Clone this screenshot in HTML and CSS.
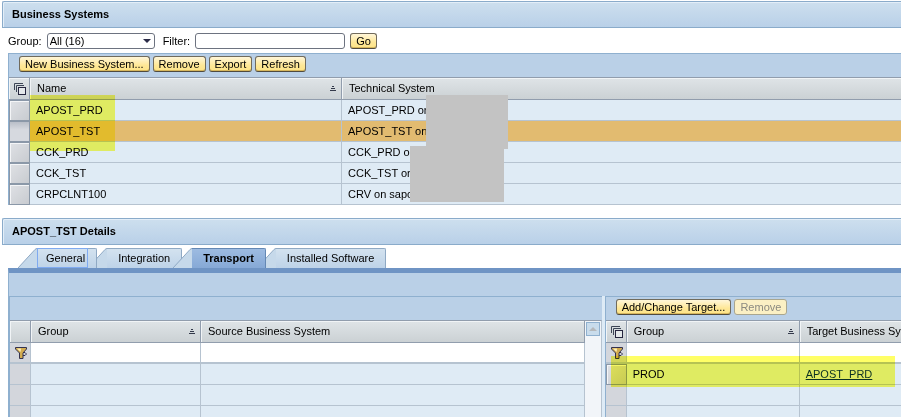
FILE: index.html
```html
<!DOCTYPE html>
<html lang="en">
    <head>
        <meta charset="utf-8">
        <title>Business Systems</title>
        <link rel="stylesheet" href="styles.css">
    </head>
    <body>
        <!-- shared icons -->
        <svg class="sprite" width="0" height="0" aria-hidden="true">
            <symbol id="icon-select" viewBox="0 0 12 12">
                <path d="M0.5 7V0.5H9M2.5 9V2.5H10" fill="none" stroke="#3d4656"/>
                <rect x="4.5" y="4.5" width="7" height="7" fill="#e4e8ea" stroke="#26263f"/>
            </symbol>
            <symbol id="icon-sort" viewBox="0 0 6 5">
                <path d="M2 0.5H4M1 2.5H5M0 4.5H6" fill="none" stroke="#33394a"/>
            </symbol>
            <symbol id="icon-filter" viewBox="0 0 13 12">
                <path d="M0.5 0.5H11.5V2L8 6V11.5H4.5V6L0.5 2Z" fill="#d3ac4e" stroke="#34324e"/>
                <path d="M2 1.5H6L5.5 5Z" fill="#fff1bd"/>
                <path d="M8 5.5H10L11.5 7L10 8.5H8" fill="none" stroke="#34324e"/>
            </symbol>
            <symbol id="slope" viewBox="0 0 19 20">
                <path d="M0 20L17 1.5Q18 0.5 19 0.5V20Z" class="slope-fill"/>
                <path d="M0 20L17 1.5Q18 0.5 19 0.5" class="slope-line"/>
            </symbol>
        </svg>

        <h1 class="panel-header">Business Systems</h1>
        <form class="filter-bar">
            <label for="group">Group:</label>
            <span class="dropdown">
                <select id="group"><option>All (16)</option></select>
            </span>
            <label class="filter-label" for="filter">Filter:</label>
            <input class="text-field" id="filter" type="text">
            <button class="btn" type="button">Go</button>
        </form>

        <div class="systems">
            <div class="toolbar">
                <button class="btn" type="button">New Business System...</button>
                <button class="btn" type="button">Remove</button>
                <button class="btn" type="button">Export</button>
                <button class="btn" type="button">Refresh</button>
            </div>
            <table class="grid">
                <colgroup><col class="col-select"><col class="col-name"><col></colgroup>
                <thead>
                    <tr>
                        <th class="select-head"><svg class="icon" width="12" height="12"><use href="#icon-select"/></svg></th>
                        <th><div class="head">Name <svg width="6" height="5"><use href="#icon-sort"/></svg></div></th>
                        <th><div class="head">Technical System</div></th>
                    </tr>
                </thead>
                <tbody>
                    <tr>
                        <td class="row-head"><button class="row-btn" type="button" aria-label="Select row"></button></td>
                        <td>APOST_PRD</td>
                        <td>APOST_PRD on</td>
                    </tr>
                    <tr class="selected">
                        <td class="row-head"><button class="row-btn" type="button" aria-label="Select row"></button></td>
                        <td>APOST_TST</td>
                        <td>APOST_TST on</td>
                    </tr>
                    <tr>
                        <td class="row-head"><button class="row-btn" type="button" aria-label="Select row"></button></td>
                        <td>CCK_PRD</td>
                        <td>CCK_PRD on</td>
                    </tr>
                    <tr>
                        <td class="row-head"><button class="row-btn" type="button" aria-label="Select row"></button></td>
                        <td>CCK_TST</td>
                        <td>CCK_TST on</td>
                    </tr>
                    <tr>
                        <td class="row-head"><button class="row-btn" type="button" aria-label="Select row"></button></td>
                        <td>CRPCLNT100</td>
                        <td>CRV on sapc</td>
                    </tr>
                </tbody>
            </table>
            <div class="marker marker-names"></div>
            <div class="redacted redacted-top"></div>
            <div class="redacted redacted-bottom"></div>
        </div>

        <h2 class="panel-header details-header">APOST_TST Details</h2>
        <div class="tabs" role="tablist">
            <button class="tab tab-1" role="tab" type="button"><svg width="19" height="20"><use href="#slope"/></svg><span class="tab-label focused">General</span></button>
            <button class="tab tab-2" role="tab" type="button"><svg width="19" height="20"><use href="#slope"/></svg><span class="tab-label">Integration</span></button>
            <button class="tab active" role="tab" type="button" aria-selected="true"><svg width="19" height="20"><use href="#slope"/></svg><span class="tab-label">Transport</span></button>
            <button class="tab" role="tab" type="button"><svg width="19" height="20"><use href="#slope"/></svg><span class="tab-label">Installed Software</span></button>
        </div>

        <div class="tab-panel">
            <div class="transport">
                <div class="source">
                    <div class="toolbar"></div>
                    <div class="scroll-area">
                        <table class="grid">
                            <colgroup><col class="col-select"><col class="col-group-source"><col></colgroup>
                            <thead>
                                <tr>
                                    <th></th>
                                    <th><div class="head">Group <svg width="6" height="5"><use href="#icon-sort"/></svg></div></th>
                                    <th><div class="head">Source Business System</div></th>
                                </tr>
                            </thead>
                            <tbody>
                                <tr class="filter-row">
                                    <td class="row-head"><svg class="icon" width="13" height="12"><use href="#icon-filter"/></svg></td>
                                    <td><input type="text" aria-label="Filter group"></td>
                                    <td><input type="text" aria-label="Filter source business system"></td>
                                </tr>
                                <tr><td class="row-head"></td><td></td><td></td></tr>
                                <tr><td class="row-head"></td><td></td><td></td></tr>
                                <tr><td class="row-head"></td><td></td><td></td></tr>
                            </tbody>
                        </table>
                        <div class="scrollbar">
                            <button class="scroll-up" type="button" aria-label="Scroll up"><svg width="8" height="4" viewBox="0 0 8 4"><path d="M4 0L8 4H0Z" fill="#b5b8bb"/></svg></button>
                        </div>
                    </div>
                </div>
                <div class="target">
                    <div class="toolbar">
                        <button class="btn" type="button">Add/Change Target...</button>
                        <button class="btn" type="button" disabled>Remove</button>
                    </div>
                    <table class="grid">
                        <colgroup><col class="col-select"><col class="col-group-target"><col></colgroup>
                        <thead>
                            <tr>
                                <th class="select-head"><svg class="icon" width="12" height="12"><use href="#icon-select"/></svg></th>
                                <th><div class="head">Group <svg width="6" height="5"><use href="#icon-sort"/></svg></div></th>
                                <th><div class="head">Target Business System</div></th>
                            </tr>
                        </thead>
                        <tbody>
                            <tr class="filter-row">
                                <td class="row-head"><svg class="icon" width="13" height="12"><use href="#icon-filter"/></svg></td>
                                <td><input type="text" aria-label="Filter group"></td>
                                <td><input type="text" aria-label="Filter target business system"></td>
                            </tr>
                            <tr>
                                <td class="row-head"><button class="row-btn" type="button" aria-label="Select row"></button></td>
                                <td>PROD</td>
                                <td><a href="#">APOST_PRD</a></td>
                            </tr>
                            <tr><td class="row-head"></td><td></td><td></td></tr>
                            <tr><td class="row-head"></td><td></td><td></td></tr>
                        </tbody>
                    </table>
                    <div class="marker marker-target"></div>
                </div>
            </div>
        </div>
    </body>
</html>
```

FILE: styles.css
```css
*{
    box-sizing: border-box;
}
html, body{
    height: 100%;
    overflow: hidden;
}
body{
    margin: 0;
    padding-top: 1px;
    background: #fff;
    color: #000;
    font-family: "Liberation Sans", Arial, sans-serif;
    font-size: 11px;
    line-height: 14px;
}
button, input, select{
    font: inherit;
    color: inherit;
    margin: 0;
}
svg{
    display: block;
    flex: none;
}
.sprite{
    position: absolute;
}

.panel-header{
    margin: 0 0 0 2px;
    height: 27px;
    padding: 0 9px;
    border: 1px solid #8aabca;
    border-right: none;
    border-radius: 2px 0 0 0;
    background: linear-gradient(#cddfee, #b9d0e8);
    box-shadow: inset 1px 1px #e3eef8;
    font-size: 11px;
    font-weight: bold;
    line-height: 25px;
}
.details-header{
    margin-top: 13px;
}

.filter-bar{
    display: flex;
    align-items: center;
    gap: 5px;
    height: 25px;
    padding-left: 8px;
}
.filter-label{
    margin-left: 3px;
}
.dropdown{
    position: relative;
    display: flex;
}
.dropdown select{
    appearance: none;
    width: 108px;
    height: 16px;
    padding: 0 2px;
    border: 1px solid #6d7380;
    border-radius: 3px;
    background: #fff;
    line-height: 14px;
}
.dropdown::after{
    content: "";
    position: absolute;
    right: 4px;
    top: 6px;
    border: 4px solid transparent;
    border-top-color: #2b2c48;
    border-bottom: none;
    pointer-events: none;
}
.text-field{
    width: 150px;
    height: 16px;
    padding: 0 3px;
    border: 1px solid #6d7380;
    border-radius: 3px;
}

.btn{
    height: 16px;
    padding: 0 5px;
    border: 1px solid #716b5c;
    border-bottom-color: #4f4a3e;
    border-radius: 3px;
    background: linear-gradient(#fff6d9, #fee796 60%, #fde488);
    box-shadow: inset 0 -1px #d7b75d;
    line-height: 14px;
    white-space: nowrap;
}
.btn:disabled{
    border-color: #a9a68f;
    background: #fbf0c4;
    box-shadow: none;
    color: #8b8a80;
}

.toolbar{
    display: flex;
    align-items: center;
    gap: 3px;
    height: 24px;
    padding: 0 10px 3px;
    border-top: 1px solid #8fb0cf;
    background: #bad0e7;
}
.systems{
    position: relative;
    margin-left: 8px;
    border-left: 1px solid #8fb0cf;
}

.grid{
    width: 100%;
    table-layout: fixed;
    border-spacing: 0;
}
.col-select{
    width: 21px;
}
.col-name{
    width: 312px;
}
.col-group-source{
    width: 170px;
}
.col-group-target{
    width: 173px;
}
.grid th{
    height: 23px;
    padding: 0 5px 2px 7px;
    border: 1px solid #919dad;
    border-left: none;
    background: linear-gradient(#dfe4e7, #cbd1d4);
    box-shadow: inset 1px 1px #f1f4f6;
    font-weight: normal;
    text-align: left;
    white-space: nowrap;
    overflow: hidden;
}
.grid th.select-head{
    padding: 0 3px 0 5px;
}
.head{
    display: flex;
    align-items: center;
    justify-content: space-between;
}
.head svg{
    margin-top: 2px;
}
.grid td{
    height: 21px;
    padding: 0 6px;
    border-right: 1px solid #b6c3d0;
    border-bottom: 1px solid #b6c3d0;
    background: #dfebf5;
    white-space: nowrap;
}
.grid th:last-child, .grid td:last-child{
    border-right: none;
}
.source .grid th:last-child{
    border-right: 1px solid #919dad;
}
.source .grid td:last-child{
    border-right: 1px solid #b6c3d0;
}
.grid .selected td{
    background: #e2bb70;
}
.grid td.row-head{
    padding: 0;
    background: #d3d6dc;
}
.row-head .icon{
    margin-left: 5px;
}
.grid td.row-head:has(.row-btn){
    border: none;
}
.row-btn{
    display: block;
    width: 100%;
    height: 21px;
    padding: 0;
    border: 1px solid #8b98a8;
    background: linear-gradient(135deg, #dfe1e5, #c8cbd0);
    box-shadow: inset 1px 1px #f4f5f7;
}
.selected .row-btn{
    background: linear-gradient(#b9bec8, #d6d9df 40%);
    box-shadow: none;
}
.grid .filter-row td{
    padding: 0;
    border-bottom-width: 2px;
}
.grid .filter-row td:not(.row-head){
    background: #fff;
}
.filter-row input{
    display: block;
    width: 100%;
    height: 19px;
    padding: 0 6px;
    border: none;
    background: none;
}
.grid a{
    color: #0b3153;
}

/* highlighter and cover blocks lie over the rows */
.marker{
    position: absolute;
    background: #ffff66;
    mix-blend-mode: multiply;
    pointer-events: none;
}
.marker-names{
    left: 21px;
    top: 42px;
    width: 85px;
    height: 56px;
}
.marker-target{
    left: 5px;
    top: 60px;
    width: 284px;
    height: 31px;
}
.redacted{
    position: absolute;
    background: #c3c3c3;
}
.redacted-top{
    left: 417px;
    top: 42px;
    width: 82px;
    height: 54px;
}
.redacted-bottom{
    left: 401px;
    top: 93px;
    width: 94px;
    height: 56px;
}

.tabs{
    display: flex;
    padding: 3px 0 0 18px;
}
.tab{
    position: relative;
    display: flex;
    height: 20px;
    padding: 0;
    border: none;
    background: none;
}
.tab + .tab{
    margin-left: -9px;
}
.tab-1{
    z-index: 2;
}
.tab-2{
    z-index: 1;
}
.slope-fill{
    fill: #c6d9ea;
}
.slope-line{
    fill: none;
    stroke: #8fa9c4;
}
.tab-label{
    padding: 0 11px;
    border-top: 1px solid #8fa9c4;
    border-right: 1px solid #8fa9c4;
    border-radius: 0 2px 0 0;
    background: linear-gradient(#d3e2ef, #bed3e8);
    line-height: 19px;
}
.focused{
    position: relative;
    padding: 0 11px 0 9px;
}
.focused::after{
    content: "";
    position: absolute;
    left: 0;
    top: -1px;
    right: 8px;
    bottom: 0;
    border: 1px solid #7faaf0;
}
.tab.active{
    z-index: 3;
    font-weight: bold;
}
.active .slope-fill{
    fill: #8fb0db;
}
.active .slope-line{
    stroke: #6488b4;
}
.active .tab-label{
    border-color: #6488b4;
    background: linear-gradient(#9dbbe1, #86a9d6);
}

.tab-panel{
    margin-left: 8px;
    padding-top: 23px;
    border-top: 5px solid #6f94c4;
    border-left: 1px solid #8fb0cf;
    background: #bad0e7;
}
.transport{
    display: grid;
    grid-template-columns: 2fr 1fr;
    gap: 3px;
    background: #deebf6;
}
.source, .target{
    min-width: 0;
    border-left: 1px solid #8fb0cf;
}
.target{
    position: relative;
}
.scroll-area{
    display: flex;
}
.scroll-area .grid{
    flex: 1;
    width: auto;
    min-width: 0;
}
.scrollbar{
    width: 17px;
    padding: 1px;
    border-top: 1px solid #919dad;
    border-right: 1px solid #b6c3d0;
    background: #f2f5f9;
}
.scroll-up{
    display: flex;
    align-items: center;
    justify-content: center;
    width: 14px;
    height: 14px;
    padding: 0;
    border: 1px solid #8fb0cf;
    background: #c9dcec;
}
```
